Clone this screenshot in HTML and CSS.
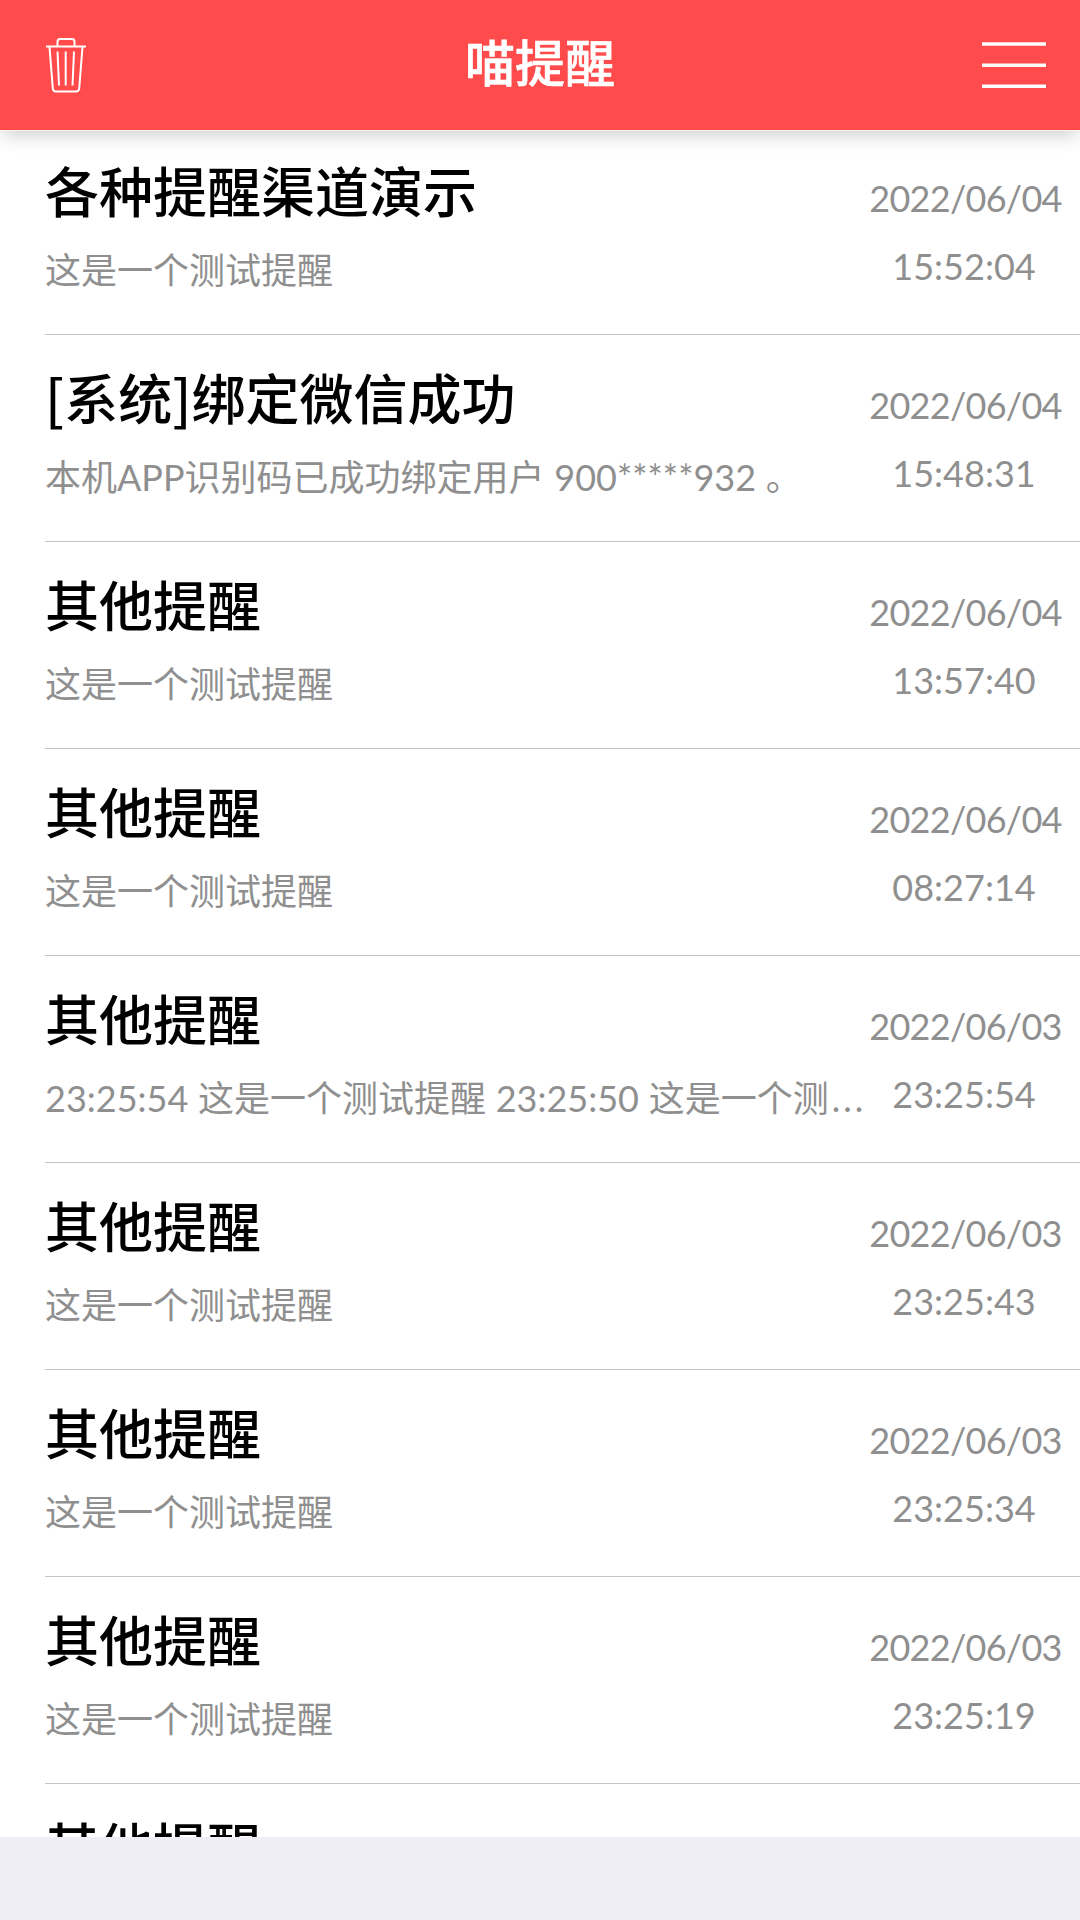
FILE: index.html
```
<!DOCTYPE html>
<html lang="zh-CN">
<head>
  <meta charset="UTF-8">
  <title>喵提醒</title>
  <link rel="stylesheet" href="styles.css">
</head>
<body>
<div class="app">
  <header class="navbar">
    <button class="nav-btn clear" type="button" aria-label="清空">
      <svg class="icon-trash" viewBox="0 0 42 56" fill="none" stroke="#fff" stroke-width="2">
        <path d="M1 9.5h40" />
        <path d="M12.5 9V4.500q0-2.500 2.500-2.500h12q2.500 0 2.500 2.500V9" />
        <path d="M4.500 10l3.300 41.500q.3 3 3.200 3h20q2.900 0 3.200-3L37.500 10" />
        <path d="M12.500 14.500l1.500 34M20.700 14.500v34M29 14.500l-1.500 34" />
      </svg>
    </button>
    <h1>喵提醒</h1>
    <button class="nav-btn" type="button" aria-label="菜单">
      <svg class="icon-menu" viewBox="0 0 64 48" stroke="#fff" stroke-width="3.600">
        <path d="M0 3h64M0 24.300h64M0 45.300h64" />
      </svg>
    </button>
  </header>

  <ul class="list">
    <li class="item">
      <div class="text">
        <h2>各种提醒渠道演示</h2>
        <p>这是一个测试提醒</p>
      </div>
      <div class="time"><span class="date">2022/06/04</span><span>15:52:04</span></div>
    </li>
    <li class="item">
      <div class="text">
        <h2>[系统]绑定微信成功</h2>
        <p>本机APP识别码已成功绑定用户 900*****932 。</p>
      </div>
      <div class="time"><span class="date">2022/06/04</span><span>15:48:31</span></div>
    </li>
    <li class="item">
      <div class="text">
        <h2>其他提醒</h2>
        <p>这是一个测试提醒</p>
      </div>
      <div class="time"><span class="date">2022/06/04</span><span>13:57:40</span></div>
    </li>
    <li class="item">
      <div class="text">
        <h2>其他提醒</h2>
        <p>这是一个测试提醒</p>
      </div>
      <div class="time"><span class="date">2022/06/04</span><span>08:27:14</span></div>
    </li>
    <li class="item">
      <div class="text">
        <h2>其他提醒</h2>
        <p>23:25:54 这是一个测试提醒 23:25:50 这是一个测<span class="dots">...</span></p>
      </div>
      <div class="time"><span class="date">2022/06/03</span><span>23:25:54</span></div>
    </li>
    <li class="item">
      <div class="text">
        <h2>其他提醒</h2>
        <p>这是一个测试提醒</p>
      </div>
      <div class="time"><span class="date">2022/06/03</span><span>23:25:43</span></div>
    </li>
    <li class="item">
      <div class="text">
        <h2>其他提醒</h2>
        <p>这是一个测试提醒</p>
      </div>
      <div class="time"><span class="date">2022/06/03</span><span>23:25:34</span></div>
    </li>
    <li class="item">
      <div class="text">
        <h2>其他提醒</h2>
        <p>这是一个测试提醒</p>
      </div>
      <div class="time"><span class="date">2022/06/03</span><span>23:25:19</span></div>
    </li>
    <li class="item">
      <div class="text">
        <h2>其他提醒</h2>
      </div>
    </li>
  </ul>
  <footer class="bottom"></footer>
</div>
</body>
</html>
```
FILE: styles.css
```
* { box-sizing: border-box; margin: 0; padding: 0; }
body { font-family: Lato, "Noto Sans CJK SC", sans-serif; background: #fff; }
.app { display: flex; flex-direction: column; width: 1080px; height: 1920px; overflow: hidden; }

.navbar {
  position: relative;
  z-index: 1;
  display: flex;
  justify-content: space-between;
  align-items: center;
  flex: none;
  height: 130px;
  padding: 0 34px 1px 45px;
  background: #ff4b4b;
  box-shadow: 0 1px 0 #fbf3f3, 0 8px 18px -3px rgba(0, 0, 0, 0.2);
}
.navbar h1 { color: #fff; font-size: 50px; font-weight: 500; line-height: 72px; padding: 0 0 4px; -webkit-text-stroke: 0.6px #fff; }
.nav-btn { display: flex; width: 64px; border: none; background: none; }
.nav-btn.clear { width: 53px; }
.icon-trash { width: 42px; height: 56px; }
.icon-menu { width: 64px; height: 48px; }

.list { flex: 1; min-height: 0; margin-top: -2px; overflow: hidden; list-style: none; }
.item {
  display: flex;
  height: 207px;
  margin-left: 45px;
  padding: 22px 16px 0 0;
  border-bottom: 1px solid #c3c3c3;
}
.text { flex: 1; min-width: 0; }
.text h2 { font-family: "Noto Sans CJK SC", sans-serif; font-size: 54px; font-weight: 500; line-height: 80px; color: #000; }
.text p {
  margin-top: 14px;
  font-size: 36px;
  line-height: 52px;
  word-spacing: 0.5px;
  color: #8f8f8f;
  white-space: nowrap;
}
.dots { margin-left: 3px; letter-spacing: 3px; }
.time {
  display: flex;
  flex-direction: column;
  align-items: center;
  flex: none;
  width: 200px;
  padding-top: 14px;
  font-size: 36px;
  line-height: 68px;
  color: #8f8f8f;
}
.date { margin-left: 3px; letter-spacing: -0.7px; }

.bottom { flex: none; height: 83px; background: #efeef4; }
```
